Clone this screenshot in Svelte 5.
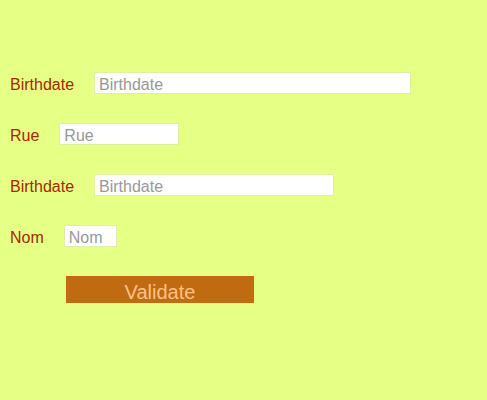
<script>
  const fields = [
    { id: 'birthdate-long', label: 'Birthdate', width: 317, rounded: true },
    { id: 'rue', label: 'Rue', width: 120 },
    { id: 'birthdate-short', label: 'Birthdate', width: 240 },
    { id: 'nom', label: 'Nom', width: 53 }
  ];
</script>

<form onsubmit={(event) => event.preventDefault()}>
  {#each fields as field (field.id)}
    <div class="row">
      <label for={field.id}>{field.label}</label>
      <input
        id={field.id}
        class:rounded={field.rounded}
        type="text"
        placeholder={field.label}
        style:width={`${field.width}px`}
      />
    </div>
  {/each}
  <button type="submit">Validate</button>
</form>

<style>
  :global(body) {
    margin: 0;
    background: #e6ff85;
  }

  form {
    display: flex;
    flex-direction: column;
    gap: 29px;
    padding: 72px 10px 24px;
    font-family: "Liberation Sans", Arial, sans-serif;
    font-size: 16px;
  }

  .row {
    display: flex;
    align-items: center;
    gap: 20px;
    height: 22px;
  }

  label {
    color: #a52a00;
    line-height: 22px;
    padding-top: 4px;
  }

  input {
    box-sizing: border-box;
    height: 22px;
    max-width: 100%;
    min-width: 0;
    padding: 3px 4px 0;
    border: 1px solid #e2eda8;
    background: #fff;
    color: #333;
    font: inherit;
  }

  .rounded {
    border-radius: 2px;
  }

  input::placeholder {
    color: #999;
    opacity: 1;
  }

  button {
    width: 188px;
    height: 27px;
    margin-left: 56px;
    padding: 6px 0 0;
    border: 0;
    background: #c06a12;
    color: #ffc080;
    font-family: inherit;
    font-size: 20px;
    line-height: 21px;
    cursor: pointer;
  }
</style>
